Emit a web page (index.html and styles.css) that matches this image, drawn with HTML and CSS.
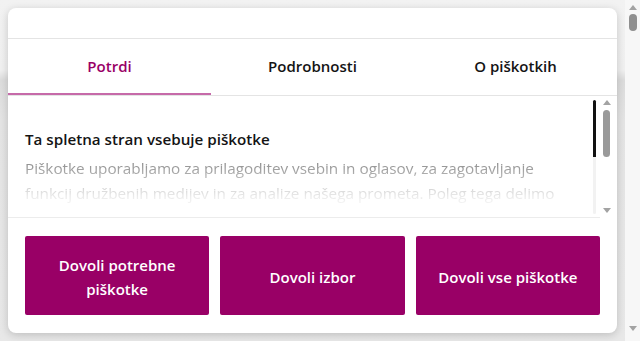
FILE: index.html
```html
<!DOCTYPE html>
<html lang="sl">
<head>
    <meta charset="UTF-8">
    <meta name="viewport" content="width=device-width, initial-scale=1.0">
    <title>Piškotki</title>
    <link rel="stylesheet" href="styles.css">
</head>
<body>
    <div class="page">
        <div class="dialog">
            <div class="dialog-header"></div>

            <nav class="tabs">
                <a href="#" class="tab active">Potrdi</a>
                <a href="#" class="tab">Podrobnosti</a>
                <a href="#" class="tab">O piškotkih</a>
            </nav>

            <div class="content">
                <div class="body">
                    <h2 class="title">Ta spletna stran vsebuje piškotke</h2>
                    <p class="text">Piškotke uporabljamo za prilagoditev vsebin in oglasov, za zagotavljanje funkcij družbenih medijev in za analize našega prometa. Poleg tega delimo informacije o tem, kako uporabljate našo spletno stran, z našimi partnerji.</p>
                    <div class="thin-bar"></div>
                </div>
                <div class="scrollbar">
                    <span class="arrow up"></span>
                    <span class="thumb"></span>
                    <span class="arrow down"></span>
                </div>
            </div>

            <div class="footer">
                <button class="button">Dovoli potrebne piškotke</button>
                <button class="button">Dovoli izbor</button>
                <button class="button">Dovoli vse piškotke</button>
            </div>
        </div>
    </div>

    <div class="page-scrollbar">
        <span class="arrow up"></span>
        <span class="page-thumb"></span>
        <span class="arrow down"></span>
    </div>
</body>
</html>
```

FILE: styles.css
```css
body {
    margin: 0;
    height: 341px;
    display: flex;
    overflow: hidden;
    font-family: "Open Sans", "DejaVu Sans", sans-serif;
    background: #ebebeb;
    color: #141414;
}

.page {
    flex: 1;
    padding: 8px;
    background: linear-gradient(#f2f2f2 0, #f0f0f0 70px, #dcdcdc 80px, #e4e4e4 120px, #e8e8e8 100%);
}

.dialog {
    height: 325px;
    background: #fff;
    border-radius: 8px;
    box-shadow: 0 2px 8px rgba(0, 0, 0, 0.18);
    display: flex;
    flex-direction: column;
    overflow: hidden;
}

.dialog-header {
    height: 30px;
    border-bottom: 1px solid #e4e4e4;
}

.tabs {
    display: flex;
    border-bottom: 1px solid #e4e4e4;
}

.tab {
    flex: 1;
    height: 54px;
    display: flex;
    justify-content: center;
    align-items: center;
    font-size: 15px;
    font-weight: 600;
    color: #141414;
    text-decoration: none;
    border-bottom: 2px solid transparent;
}

.tab.active {
    color: #990066;
    border-bottom-color: #c66aa9;
}

.content {
    height: 122px;
    display: flex;
}

.body {
    flex: 1;
    position: relative;
    padding: 31px 30px 0 17px;
    overflow: hidden;
    border-bottom: 1px solid #ececec;
}

.title {
    margin: 0 0 5px;
    font-size: 15.2px;
    font-weight: 600;
    line-height: 24px;
}

.text {
    margin: 0;
    font-size: 15.3px;
    line-height: 25px;
    color: #6e6e6e;
    -webkit-mask-image: linear-gradient(rgba(0, 0, 0, 0.9) 0, rgba(0, 0, 0, 0.15) 40px, rgba(0, 0, 0, 0) 55px);
    mask-image: linear-gradient(rgba(0, 0, 0, 0.9) 0, rgba(0, 0, 0, 0.15) 40px, rgba(0, 0, 0, 0) 55px);
}

.thin-bar {
    position: absolute;
    top: 4px;
    right: 4px;
    width: 3px;
    height: 114px;
    background: linear-gradient(#111 0, #111 57px, #f2f2f2 57px);
    border-radius: 2px;
}

.scrollbar {
    width: 17px;
    padding-right: 4px;
    display: flex;
    flex-direction: column;
    align-items: center;
    padding-top: 4px;
    padding-bottom: 5px;
    box-sizing: border-box;
}

.scrollbar .thumb {
    width: 7px;
    height: 47px;
    margin-top: 5px;
    border-radius: 4px;
    background: #9a9a9a;
}

.arrow {
    width: 0;
    height: 0;
    border-left: 4px solid transparent;
    border-right: 4px solid transparent;
}

.arrow.up {
    border-bottom: 5px solid #a3a3a3;
}

.arrow.down {
    margin-top: auto;
    border-top: 5px solid #a3a3a3;
}

.footer {
    flex: 1;
    display: flex;
    gap: 11px;
    padding: 18px 17px;
}

.button {
    flex: 1;
    border: none;
    border-radius: 2px;
    background: #990066;
    color: #fff;
    font-family: "Open Sans", "DejaVu Sans", sans-serif;
    font-size: 15px;
    font-weight: 600;
    line-height: 24px;
    padding: 2px 16px 0;
    cursor: pointer;
}

.page-scrollbar {
    width: 15px;
    background: #f7f7f7;
    display: flex;
    flex-direction: column;
    align-items: center;
    padding: 5px 0 10px;
    box-sizing: border-box;
}

.page-thumb {
    width: 8px;
    height: 17px;
    margin-top: 4px;
    border-radius: 4px;
    background: #8f8f8f;
}
```
